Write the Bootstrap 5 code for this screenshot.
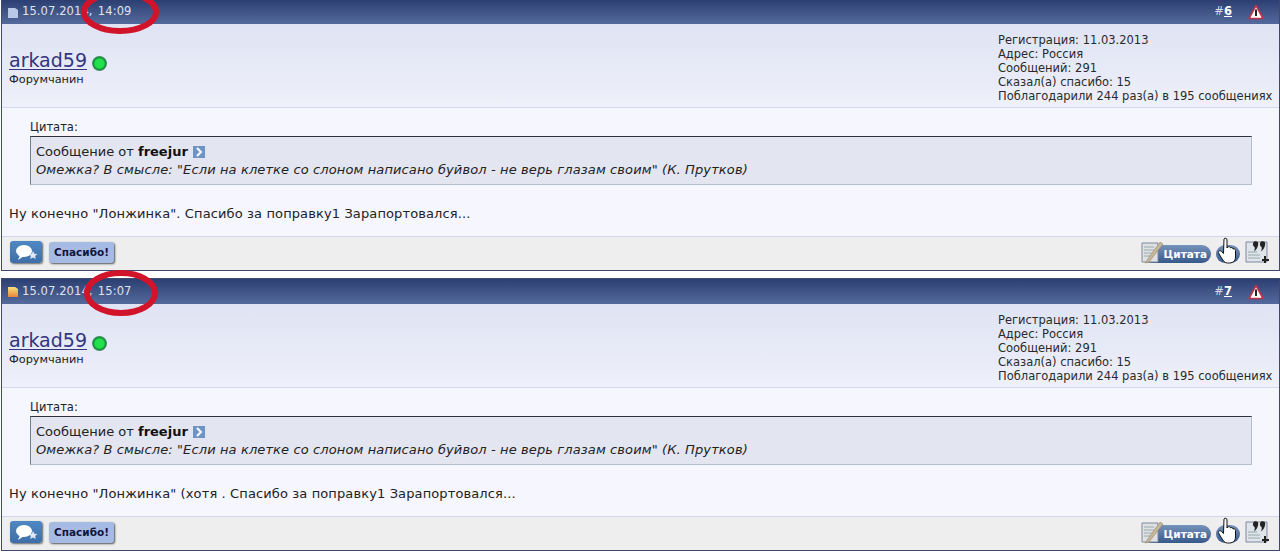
<!DOCTYPE html>
<html lang="ru"><head><meta charset="utf-8"><title>Forum</title>
<link href="https://cdn.jsdelivr.net/npm/bootstrap@5.3.0/dist/css/bootstrap.min.css" rel="stylesheet">
<style>
html,body{margin:0;background:#fff;overflow:hidden}
body{font-family:"DejaVu Sans",Verdana,sans-serif;color:#222;font-size:13px;width:1280px;height:553px;position:relative}
.fp-post{border:1px solid #3d4a6e;margin:0 1px 0 1px;width:1279px;background:#f5f5ff;box-sizing:border-box}
.fp-first{height:271px;margin-bottom:7px;border-top:0}
.fp-second{height:273px}
.fp-head{height:24px;background:linear-gradient(#2c3f72,#556a9c);color:#dfe5f2;font-size:11.5px;padding:0 9px 0 6px}
.fp-second .fp-head{height:25px}
.fp-date{margin-left:4px;letter-spacing:.1px;word-spacing:1.5px}
.fp-num{font-size:11.5px;margin-right:16px;color:#d5dbe9}
.fp-num u{font-weight:700;color:#fff}
.fp-warn{margin-right:6px}
.fp-user{height:84px;background:linear-gradient(#dfe3f3,#eef0fa);border-bottom:1px solid #d6d8ef;padding:0 6px 0 7px}
.fp-name{font-size:19px;color:#33357f;text-decoration:underline;text-underline-offset:2px;text-decoration-thickness:1px;line-height:24px}
.fp-rank{font-size:11.3px;line-height:13px;color:#222;margin-top:1px}
.fp-dot{width:15px;height:15px;border-radius:50%;background:radial-gradient(#22e04c 40%,#138a3a 60%,#8b96ad 78%);margin:8px 0 0 5px}
.fp-stats{font-size:11.5px;line-height:14px;color:#2a2a2a;width:275px;margin-top:9px;white-space:nowrap}
.fp-body{height:128px;padding:12px 0 0 7px;background:#f6f6ff}
.fp-qlabel{font-size:11.5px;line-height:14px;margin-left:21px}
.fp-quote{margin:2px 27px 0 21px;height:49px;border:1px solid #b5bdd0;border-top:1px solid #30303f;border-left:1px solid #777d90;background:#e3e6f1;padding:6px 5px 0;font-size:13px;line-height:18px}
.fp-quote i{letter-spacing:.12px}
.fp-quote b{color:#111;font-size:13px}
.fp-go{display:inline-block;width:12px;height:12px;vertical-align:-2px;margin-left:1px}
.fp-text{font-size:13px;line-height:18px;margin-top:20px;letter-spacing:.12px}
.fp-foot{height:34px;background:#eeeeee;border-top:1px solid #d3d6ec;padding:0 9px 3px 8px}
.fp-ring{position:absolute;pointer-events:none}
.fp-r1{left:80px;top:-10px}
.fp-r2{left:83px;top:269px}
.fp-thanks{width:65px;height:21px;background:#a6bbe4;border-radius:3px;box-shadow:1px 1px 2px #555;font-size:10.5px;font-weight:700;color:#10153a;text-align:center;line-height:21px;margin-left:7px;padding:0}
.fp-reply{width:32px;height:22px;border-radius:3px;background:linear-gradient(#4f88c4,#3d6fa8);box-shadow:1px 1px 2px #666;display:flex;align-items:center;justify-content:center}
.fp-cit{position:relative;width:73px;height:23px}
.fp-citbar{position:absolute;left:4px;top:4px;width:69px;height:18px;border-radius:9px;background:linear-gradient(#7693bb,#36598c);color:#fff;font-size:10.5px;font-weight:700;text-align:right;padding-right:4px;line-height:18px}
.fp-doc{position:absolute;left:2px;top:0}
.fp-handwrap{width:26px;height:23px}
.fp-hand{left:3px;top:-4px}
.fp-handbar{left:1px;width:24px}
</style></head><body>

<div class="fp-post fp-first">
 <div class="fp-head d-flex align-items-center justify-content-between">
  <div class="d-flex align-items-center"><svg width="10" height="11" viewBox="0 0 10 11"><path d="M0 1h7l3 2v8H0z" fill="#b8c8e6"/></svg><span class="fp-date">15.07.2014, 14:09</span></div>
  <div class="d-flex align-items-center"><span class="fp-num">#<u>6</u></span>
   <svg class="fp-warn" width="16" height="16" viewBox="0 0 16 16"><path d="M8 1.500L15 14.500H1z" fill="#fff" stroke="#c0314c" stroke-width="1.600" stroke-linejoin="round"/><path d="M8 5.500v6.500" stroke="#222" stroke-width="2"/></svg></div>
 </div>
 <div class="fp-user d-flex justify-content-between">
  <div style="padding-top:24px"><div class="d-flex"><span class="fp-name">arkad59</span><span class="fp-dot"></span></div><div class="fp-rank">Форумчанин</div></div>
  <div class="fp-stats">Регистрация: 11.03.2013<br>Адрес: Россия<br>Сообщений: 291<br>Сказал(а) спасибо: 15<br>Поблагодарили 244 раз(а) в 195 сообщениях</div>
 </div>
 <div class="fp-body">
  <div class="fp-qlabel">Цитата:</div>
  <div class="fp-quote">Сообщение от <b>freejur</b> <svg class="fp-go" viewBox="0 0 12 12"><rect width="12" height="12" fill="#6d94c6"/><path d="M4 2l4 4-4 4" fill="none" stroke="#fff" stroke-width="2"/></svg><br><i>Омежка? В смысле: "Если на клетке со слоном написано буйвол - не верь глазам своим" (К. Прутков)</i></div>
  <div class="fp-text">Ну конечно "Лонжинка". Спасибо за поправку1 Зарапортовался...</div>
 </div>
 <div class="fp-foot d-flex align-items-center justify-content-between">
  <div class="d-flex align-items-center">
   <div class="fp-reply"><svg width="24" height="18" viewBox="0 0 24 18"><ellipse cx="10" cy="8" rx="8" ry="6" fill="#fff"/><path d="M6 12l-2 5 6-4z" fill="#fff"/><path d="M19 8l1.300 2.800 3 .3-2.200 2 .7 3-2.800-1.600-2.800 1.600.7-3-2.200-2 3-.3z" fill="#dfe8f5"/></svg></div>
   <button class="fp-thanks border-0">Спасибо!</button>
  </div>
  <div class="d-flex align-items-center gap-1">
   <div class="fp-cit"><div class="fp-citbar">Цитата</div><svg class="fp-doc" width="24" height="23" viewBox="0 0 24 23"><path d="M2 2h16v19H2z" fill="#dfe1e4" stroke="#7f8aa0"/><path d="M4 6h10M4 9h10M4 12h8M4 15h8" stroke="#9aa"/><path d="M5 22L20 1l3 2L9 21z" fill="#c9b79a" stroke="#8a7a60" stroke-width=".5"/></svg></div>
   <div class="position-relative fp-handwrap"><div class="fp-citbar fp-handbar"></div><svg class="position-absolute fp-hand" width="20" height="28" viewBox="0 0 20 28"><path d="M6 2c1-1.500 3-1 3 1v8l1-1c1-1 2.500 0 2.500 1 1-1 2.500-.5 2.500 1 1-.5 2.500 0 2.500 1.500V20c0 3-2 6-6 6h-2c-3 0-4-2-6-5l-3-5c-1-2 1.500-3 3-1.500l2 2z" fill="#fff" stroke="#111"/></svg></div>
   <svg width="25" height="24" viewBox="0 0 25 24"><path d="M1 2h21v20H1z" fill="#dfe3ea" stroke="#7f8aa0"/><path d="M3 12h9M3 15h12M3 18h12" stroke="#9aa"/><path d="M9 1.500c3-1 5 .5 4 4-.6 2.500-2 4.500-4 6 .8-2 1-3.500.5-4.500C7.500 6 7.500 3 9 1.500zM16 1.500c3-1 5 .5 4 4-.6 2.500-2 4.500-4 6 .8-2 1-3.500.5-4.500C14.500 6 14.500 3 16 1.500z" fill="#222"/><path d="M20 16v7M17 20h7" stroke="#222" stroke-width="2"/></svg>
  </div>
 </div>
</div>

<div class="fp-post fp-second">
 <div class="fp-head d-flex align-items-center justify-content-between">
  <div class="d-flex align-items-center"><svg width="10" height="11" viewBox="0 0 10 11"><defs><linearGradient id="g" x2="0" y2="1"><stop offset="0" stop-color="#f7e27c"/><stop offset="1" stop-color="#e8853a"/></linearGradient></defs><path d="M0 1h7l3 2v8H0z" fill="url(#g)"/></svg><span class="fp-date">15.07.2014, 15:07</span></div>
  <div class="d-flex align-items-center"><span class="fp-num">#<u>7</u></span>
   <svg class="fp-warn" width="16" height="16" viewBox="0 0 16 16"><path d="M8 1.500L15 14.500H1z" fill="#fff" stroke="#c0314c" stroke-width="1.600" stroke-linejoin="round"/><path d="M8 5.500v6.500" stroke="#222" stroke-width="2"/></svg></div>
 </div>
 <div class="fp-user d-flex justify-content-between">
  <div style="padding-top:24px"><div class="d-flex"><span class="fp-name">arkad59</span><span class="fp-dot"></span></div><div class="fp-rank">Форумчанин</div></div>
  <div class="fp-stats">Регистрация: 11.03.2013<br>Адрес: Россия<br>Сообщений: 291<br>Сказал(а) спасибо: 15<br>Поблагодарили 244 раз(а) в 195 сообщениях</div>
 </div>
 <div class="fp-body">
  <div class="fp-qlabel">Цитата:</div>
  <div class="fp-quote">Сообщение от <b>freejur</b> <svg class="fp-go" viewBox="0 0 12 12"><rect width="12" height="12" fill="#6d94c6"/><path d="M4 2l4 4-4 4" fill="none" stroke="#fff" stroke-width="2"/></svg><br><i>Омежка? В смысле: "Если на клетке со слоном написано буйвол - не верь глазам своим" (К. Прутков)</i></div>
  <div class="fp-text">Ну конечно "Лонжинка" (хотя . Спасибо за поправку1 Зарапортовался...</div>
 </div>
 <div class="fp-foot d-flex align-items-center justify-content-between">
  <div class="d-flex align-items-center">
   <div class="fp-reply"><svg width="24" height="18" viewBox="0 0 24 18"><ellipse cx="10" cy="8" rx="8" ry="6" fill="#fff"/><path d="M6 12l-2 5 6-4z" fill="#fff"/><path d="M19 8l1.300 2.800 3 .3-2.200 2 .7 3-2.800-1.600-2.800 1.600.7-3-2.200-2 3-.3z" fill="#dfe8f5"/></svg></div>
   <button class="fp-thanks border-0">Спасибо!</button>
  </div>
  <div class="d-flex align-items-center gap-1">
   <div class="fp-cit"><div class="fp-citbar">Цитата</div><svg class="fp-doc" width="24" height="23" viewBox="0 0 24 23"><path d="M2 2h16v19H2z" fill="#dfe1e4" stroke="#7f8aa0"/><path d="M4 6h10M4 9h10M4 12h8M4 15h8" stroke="#9aa"/><path d="M5 22L20 1l3 2L9 21z" fill="#c9b79a" stroke="#8a7a60" stroke-width=".5"/></svg></div>
   <div class="position-relative fp-handwrap"><div class="fp-citbar fp-handbar"></div><svg class="position-absolute fp-hand" width="20" height="28" viewBox="0 0 20 28"><path d="M6 2c1-1.500 3-1 3 1v8l1-1c1-1 2.500 0 2.500 1 1-1 2.500-.5 2.500 1 1-.5 2.500 0 2.500 1.500V20c0 3-2 6-6 6h-2c-3 0-4-2-6-5l-3-5c-1-2 1.500-3 3-1.500l2 2z" fill="#fff" stroke="#111"/></svg></div>
   <svg width="25" height="24" viewBox="0 0 25 24"><path d="M1 2h21v20H1z" fill="#dfe3ea" stroke="#7f8aa0"/><path d="M3 12h9M3 15h12M3 18h12" stroke="#9aa"/><path d="M9 1.500c3-1 5 .5 4 4-.6 2.500-2 4.500-4 6 .8-2 1-3.500.5-4.500C7.500 6 7.500 3 9 1.500zM16 1.500c3-1 5 .5 4 4-.6 2.500-2 4.500-4 6 .8-2 1-3.500.5-4.500C14.500 6 14.500 3 16 1.500z" fill="#222"/><path d="M20 16v7M17 20h7" stroke="#222" stroke-width="2"/></svg>
  </div>
 </div>
</div>

<svg class="fp-ring fp-r1" width="82" height="46" viewBox="0 0 82 46"><ellipse cx="40" cy="22" rx="36" ry="19" fill="none" stroke="#d2142a" stroke-width="6"/></svg>
<svg class="fp-ring fp-r2" width="78" height="48" viewBox="0 0 78 48"><ellipse cx="38" cy="24" rx="34" ry="20" fill="none" stroke="#d2142a" stroke-width="6"/></svg>
</body></html>
